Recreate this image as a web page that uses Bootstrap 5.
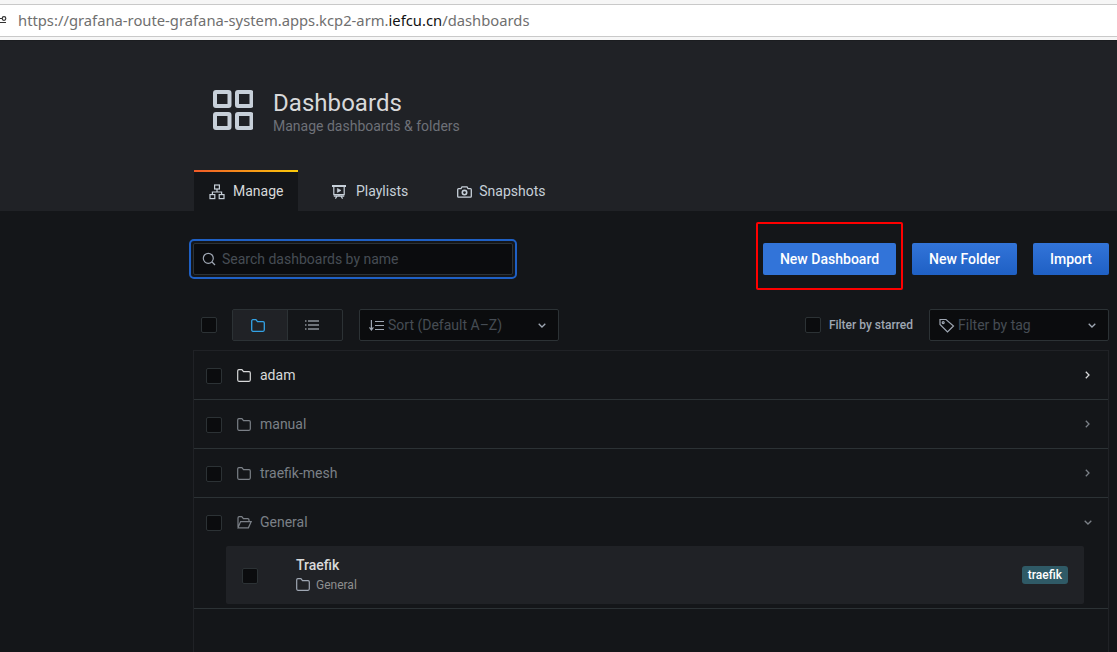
<!DOCTYPE html>
<html lang="en">
<head>
<meta charset="utf-8">
<title>Dashboards</title>
<link href="https://cdn.jsdelivr.net/npm/bootstrap@5.3.0/dist/css/bootstrap.min.css" rel="stylesheet">
<style>
html,body{height:652px;overflow:hidden}
body{background:#141619;font-family:Roboto,"Liberation Sans",sans-serif;color:#c7d0d9;font-size:14px}
svg{display:block;flex:none}
.urlbar{height:40px;background:#f6f6f6;padding-top:4px}
.urlfield{height:33px;background:#fff;border-top:1px solid #c9c9c9;border-bottom:1px solid #c9c9c9;font-family:"Noto Sans","DejaVu Sans",sans-serif;font-size:14.77px;color:#6f6f6f;padding-left:18px;position:relative}
.urlfield b{font-weight:400;color:#111}
.siteicon{position:absolute;left:-2px;top:10px}
.pagehead{background:#202226;height:171px;border-top:1px solid #1b1d20}
.shell{margin-left:194px;width:915px}
.headrow{padding:49px 0 0 19px;height:129px}
.headrow h1{font-size:24px;line-height:26px;font-weight:400;margin:0;color:#d8d9da;letter-spacing:.05px}
.headrow p{font-size:14px;line-height:20px;color:#6e7178;margin:0}
.tabrow{height:41px}
.tabitem{height:41px;padding:2px 23px 0;color:#c7d0d9;gap:10px;font-size:14px;margin-right:11px}
.tabitem.active{background:#141619;position:relative;padding:2px 15px 0;width:104px;gap:8px;color:#d8d9da}
.tabitem.active::before{content:"";position:absolute;left:0;right:0;top:0;height:2px;background:linear-gradient(90deg,#f05a28,#fbca0a)}
.tabitem.last{padding-left:15px;gap:7px}
.actionrow{height:98px;padding-top:11px}
.searchring{margin-left:-5px;width:328px;height:40px;margin-top:17px;border:2px solid #1f60c4;border-radius:5px;padding:2px;background:#141619}
.searchbox{height:32px;background:#0b0c0e;border:1px solid #2c3235;border-radius:2px;padding-left:8px;gap:6px;color:#464c54;font-size:14px}
.redbox{width:147px;height:68px;border:2px solid #f00;border-radius:2px;padding:19px 5px 0;margin-right:9px}
.gbtn{height:32px;background:linear-gradient(180deg,#3274d9,#1f60c4);color:#fff;border:0;border-radius:2px;font-size:14px;font-weight:500;padding:0 17px;letter-spacing:.02px;line-height:33px;white-space:nowrap}
.redbox .gbtn{width:133px;background:#3274d9;padding:0;text-align:center}
.btnstack{margin-top:21px;gap:16px}
.boxck{width:16px;height:16px;background:#0b0c0e;border:1px solid #2c3235;border-radius:2px;flex:none;display:block}
.toolrow{height:32px;margin-bottom:9px}
.toolrow>.boxck:first-child{margin-left:7px}
.viewsw{width:111px;height:32px;border:1px solid #2c3235;border-radius:2px;margin-left:15px}
.viewsw>span{display:flex;align-items:center;justify-content:center;height:100%}
.viewsw>span:first-child{width:55px;background:#202226;border-right:1px solid #2c3235;padding-right:5px}
.viewsw>span:last-child{flex:1;padding-right:6px}
.drop{height:32px;background:#0b0c0e;border:1px solid #2c3235;border-radius:2px;color:#464c54;font-size:14px;padding:0 12px 0 9px;gap:4px}
.dropsort{width:200px;margin-left:16px}
.droptag{width:180px;margin-left:16px;gap:3px}
.grow1{flex:1}
.starlabel{font-size:12px;font-weight:500;color:#9fa7b3;margin-left:8px}
.listbox{margin-left:-1px;width:916px;height:302px;border-left:1px solid #202226;border-right:1px solid #202226;border-top:1px solid #202226}
.folderrow{height:49px;border-bottom:1px solid #2c3235;padding:0 18px 0 12px;font-size:14px;color:#7b8087}
.folderrow.open{height:48px;border-bottom:0}
.folderrow .boxck{margin-right:15px;margin-top:2px}
.folderrow .fname{margin-left:9px}
.folderrow.open .fname{margin-left:8px}
.folderrow.open{padding-right:16px}
.folderrow.bright{color:#d8d9da}
.folderwrap{height:63px;border-bottom:1px solid #2c3235;padding:0 24px 0 32px}
.dashitem{height:58px;background:#202226;border-radius:2px;padding:0 16px}
.dashitem>.boxck{margin-right:38px;margin-top:2px}
.dashtitle{font-size:14px;font-weight:500;color:#d8d9da;line-height:18px}
.dashsub{font-size:12px;color:#8e8e8e;gap:6px;line-height:20px;margin-top:1px}
.tagpill{background:#2f5a66;color:#fff;font-size:12px;font-weight:500;line-height:18px;height:18px;border-radius:3px;padding:0 6px}
</style>
</head>
<body>
<div class="urlbar">
  <div class="urlfield d-flex align-items-center">
    <svg class="siteicon" width="10" height="10" viewBox="0 0 10 10" fill="none" stroke="#333" stroke-width="1.2"><path d="M0 3.5h4M0 7.500h8"/><circle cx="6" cy="3.500" r="1.800"/></svg>
    <span>https://grafana-route-grafana-system.apps.kcp2-arm.<b>iefcu.cn</b>/dashboards</span>
  </div>
</div>

<header class="pagehead">
  <div class="shell">
    <div class="headrow d-flex">
      <svg width="40" height="40" viewBox="0 0 40 40" fill="none" stroke="#c7d0d9" stroke-width="4"><rect x="2" y="2" width="14.500" height="14" rx="1"/><rect x="24" y="2" width="14.500" height="14" rx="1"/><rect x="2" y="24" width="14.500" height="14" rx="1"/><rect x="24" y="24" width="14.500" height="14" rx="1"/></svg>
      <div class="ms-3 ps-1">
        <h1>Dashboards</h1>
        <p>Manage dashboards &amp; folders</p>
      </div>
    </div>
    <nav class="tabrow d-flex">
      <div class="tabitem active d-flex align-items-center">
        <svg width="16" height="16" viewBox="0 0 16 16" fill="none" stroke="#c7d0d9" stroke-width="1.200"><rect x="5.600" y="1" width="4.800" height="4"/><rect x="1" y="10.600" width="4.800" height="4"/><rect x="10.200" y="10.600" width="4.800" height="4"/><path d="M8 5v3M3.400 10.600V8h9.200v2.600"/></svg>
        <span>Manage</span>
      </div>
      <div class="tabitem d-flex align-items-center">
        <svg width="14" height="14" viewBox="0 0 14 14" fill="none" stroke="#c7d0d9" stroke-width="1.200"><path d="M0 1h14" stroke-width="2"/><path d="M1.800 1v8.600h10.400V1M7 9.600v1.600M3.400 13.600l1.600-2.400h4l1.600 2.400M1.800 11.200h10.400"/><path d="M5.400 3.400v4l3.600-2z" fill="#c7d0d9" stroke-width=".6"/></svg>
        <span>Playlists</span>
      </div>
      <div class="tabitem last d-flex align-items-center">
        <svg width="15" height="12" viewBox="0 0 15 12" fill="none" stroke="#c7d0d9" stroke-width="1.300"><path d="M1.600 2.600h2.400l1-1.800h5l1 1.800h2.400c.5 0 .9.400.9.900v6.800c0 .5-.4.9-.9.900H1.600c-.5 0-.9-.4-.9-.9V3.500c0-.5.4-.9.900-.9z"/><circle cx="7.500" cy="6.600" r="2.200" stroke-width="1.600"/></svg>
        <span>Snapshots</span>
      </div>
    </nav>
  </div>
</header>

<main class="shell">
  <div class="actionrow d-flex justify-content-between align-items-start">
    <div class="searchring">
      <div class="searchbox d-flex align-items-center">
        <svg width="14" height="14" viewBox="0 0 14 14" fill="none" stroke="#9fa7b3" stroke-width="1.200"><circle cx="6.300" cy="6.300" r="5"/><path d="M10 10l3 3"/></svg>
        <span>Search dashboards by name</span>
      </div>
    </div>
    <div class="d-flex">
      <div class="redbox"><div class="gbtn">New Dashboard</div></div>
      <div class="btnstack d-flex">
        <div class="gbtn">New Folder</div>
        <div class="gbtn">Import</div>
      </div>
    </div>
  </div>

  <div class="toolrow d-flex align-items-center">
    <span class="boxck"></span>
    <div class="viewsw d-flex">
      <span><svg width="14" height="13" viewBox="0 0 14 13" fill="none" stroke="#33a2e5" stroke-width="1.300"><path d="M.7 2c0-.7.5-1.300 1.200-1.300h3l1.600 2h5.600c.7 0 1.200.5 1.200 1.200v6.900c0 .7-.5 1.500-1.200 1.500H1.900c-.7 0-1.200-.8-1.200-1.500z"/></svg></span>
      <span><svg width="14" height="10" viewBox="0 0 14 10" fill="none" stroke="#c7d0d9" stroke-width="1.100"><path d="M0 1h1.500M3 1h11M0 5h1.500M3 5h11M0 9h1.500M3 9h11"/></svg></span>
    </div>
    <div class="drop dropsort d-flex align-items-center">
      <svg width="15" height="11" viewBox="0 0 15 11" fill="none" stroke="#9fa7b3" stroke-width="1.200"><path d="M2.400 0v10M.4 7.400l2 2.600 2-2.600M6 1.500h9M6 5.500h9M6 9.500h9"/></svg>
      <span class="grow1">Sort (Default A&#8211;Z)</span>
      <svg width="8" height="5" viewBox="0 0 8 5" fill="none" stroke="#9fa7b3" stroke-width="1.300"><path d="M.7.7L4 4l3.300-3.300"/></svg>
    </div>
    <div class="grow1"></div>
    <span class="boxck"></span>
    <span class="starlabel">Filter by starred</span>
    <div class="drop droptag d-flex align-items-center">
      <svg width="16" height="15" viewBox="0 0 16 15" fill="none" stroke="#9fa7b3" stroke-width="1.200"><path d="M1 1.500v5l7.500 7.500 6-6L7 1.500z"/><circle cx="4.200" cy="4.600" r="1"/></svg>
      <span class="grow1">Filter by tag</span>
      <svg width="8" height="5" viewBox="0 0 8 5" fill="none" stroke="#9fa7b3" stroke-width="1.300"><path d="M.7.7L4 4l3.300-3.300"/></svg>
    </div>
  </div>

  <section class="listbox">
    <div class="folderrow bright d-flex align-items-center">
      <span class="boxck"></span>
      <svg width="14" height="13" viewBox="0 0 14 13" fill="none" stroke="#d8d9da" stroke-width="1.200"><path d="M.7 2c0-.7.5-1.300 1.200-1.300h3l1.600 2h5.600c.7 0 1.200.5 1.200 1.200v6.900c0 .7-.5 1.500-1.200 1.500H1.900c-.7 0-1.200-.8-1.200-1.500z"/></svg>
      <span class="fname grow1">adam</span>
      <svg width="5" height="8" viewBox="0 0 5 8" fill="none" stroke="#d8d9da" stroke-width="1.300"><path d="M.8.7L4 4 .8 7.300"/></svg>
    </div>
    <div class="folderrow d-flex align-items-center">
      <span class="boxck"></span>
      <svg width="14" height="13" viewBox="0 0 14 13" fill="none" stroke="#7b8087" stroke-width="1.200"><path d="M.7 2c0-.7.5-1.300 1.200-1.300h3l1.600 2h5.600c.7 0 1.200.5 1.200 1.200v6.900c0 .7-.5 1.500-1.200 1.500H1.900c-.7 0-1.200-.8-1.200-1.500z"/></svg>
      <span class="fname grow1">manual</span>
      <svg width="5" height="8" viewBox="0 0 5 8" fill="none" stroke="#7b8087" stroke-width="1.300"><path d="M.8.7L4 4 .8 7.300"/></svg>
    </div>
    <div class="folderrow d-flex align-items-center">
      <span class="boxck"></span>
      <svg width="14" height="13" viewBox="0 0 14 13" fill="none" stroke="#7b8087" stroke-width="1.200"><path d="M.7 2c0-.7.5-1.300 1.200-1.300h3l1.600 2h5.600c.7 0 1.200.5 1.200 1.200v6.900c0 .7-.5 1.500-1.200 1.500H1.900c-.7 0-1.200-.8-1.200-1.500z"/></svg>
      <span class="fname grow1">traefik-mesh</span>
      <svg width="5" height="8" viewBox="0 0 5 8" fill="none" stroke="#7b8087" stroke-width="1.300"><path d="M.8.7L4 4 .8 7.300"/></svg>
    </div>
    <div class="folderrow open d-flex align-items-center">
      <span class="boxck"></span>
      <svg width="15" height="13" viewBox="0 0 15 13" fill="none" stroke="#7b8087" stroke-width="1.200"><path d="M1 11V2c0-.7.5-1.300 1.200-1.300h2.600l1.600 2h4.400c.7 0 1.200.5 1.200 1.200v1M1 11.800h10.400L14.200 5.600H3.600L1 11.800z"/></svg>
      <span class="fname grow1">General</span>
      <svg width="8" height="5" viewBox="0 0 8 5" fill="none" stroke="#7b8087" stroke-width="1.300"><path d="M.7.7L4 4l3.300-3.300"/></svg>
    </div>
    <div class="folderwrap">
      <div class="dashitem d-flex align-items-center">
        <span class="boxck"></span>
        <div class="grow1">
          <div class="dashtitle">Traefik</div>
          <div class="dashsub d-flex align-items-center">
            <svg width="14" height="13" viewBox="0 0 14 13" fill="none" stroke="#9fa7b3" stroke-width="1.200"><path d="M.7 2c0-.7.5-1.300 1.200-1.300h3l1.600 2h5.600c.7 0 1.200.5 1.200 1.200v6.900c0 .7-.5 1.500-1.200 1.500H1.900c-.7 0-1.200-.8-1.200-1.500z"/></svg>
            <span>General</span>
          </div>
        </div>
        <span class="tagpill">traefik</span>
      </div>
    </div>
  </section>
</main>
</body>
</html>
